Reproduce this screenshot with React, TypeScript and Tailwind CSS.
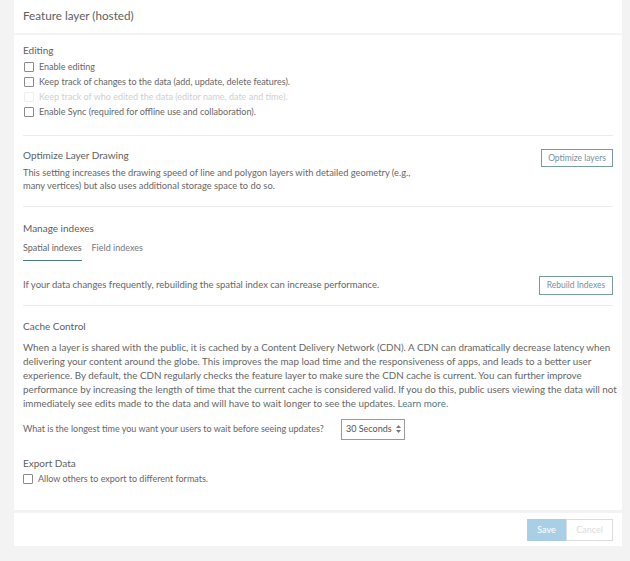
import React from "react";

const font = { fontFamily: "Lato, 'Open Sans', sans-serif" };

function Check({ label, disabled }: { label: string; disabled?: boolean }) {
  return (
    <div className="flex items-center h-[15px] text-[9px]">
      <span
        className={`w-[10px] h-[10px] border rounded-[1px] mr-[5px] ${
          disabled ? "border-[#eeeeee]" : "border-[#8a8a8a]"
        }`}
      />
      <span className={disabled ? "text-[#d0d0d0]" : "text-[#666666]"}>{label}</span>
    </div>
  );
}

function Divider() {
  return <div className="h-px bg-[#ececec]" />;
}

export default function App() {
  return (
    <div className="w-[630px] h-[561px] bg-[#f3f3f3] px-[14px] text-[9.5px] text-[#666666]" style={font}>
      <div className="w-[608px] bg-white">
        {/* header */}
        <div className="h-[33px] flex items-center px-[9px] pb-[2px] text-[11.7px] text-[#5e5e5e]">
          Feature layer (hosted)
        </div>
        <div className="h-[2px] bg-[#f3f3f3]" />

        <div className="px-[9px] h-[475px]">
          {/* Editing */}
          <div className="pt-[8px] pb-[16px]">
            <div className="text-[10px] text-[#5e5e5e] mb-px">Editing</div>
            <div className="pl-px">
              <Check label="Enable editing" />
              <Check label="Keep track of changes to the data (add, update, delete features)." />
              <Check label="Keep track of who edited the data (editor name, date and time)." disabled />
              <Check label="Enable Sync (required for offline use and collaboration)." />
            </div>
          </div>
          <Divider />

          {/* Optimize */}
          <div className="flex justify-between pt-[12px] pb-[14px]">
            <div className="w-[420px]">
              <div className="text-[10px] text-[#5e5e5e] mb-[3px]">Optimize Layer Drawing</div>
              <div className="leading-[13px] text-[9.3px]">
                This setting increases the drawing speed of line and polygon layers with detailed geometry (e.g.,
                <br />
                many vertices) but also uses additional storage space to do so.
              </div>
            </div>
            <button className="self-start mt-[1px] h-[18px] w-[72px] border border-[#7a9aa2] text-[#7890a0] text-[8.5px]">
              Optimize layers
            </button>
          </div>
          <Divider />

          {/* Manage indexes */}
          <div className="pt-[14px]">
            <div className="text-[10px] text-[#5e5e5e] mb-[5px]">Manage indexes</div>
            <div className="flex gap-[10px] text-[9px]">
              <div className="pb-[5px] border-b-[1.5px] border-[#4d7d8a] text-[#666666]">Spatial indexes</div>
              <div className="pb-[5px] text-[#777777]">Field indexes</div>
            </div>
            <div className="flex justify-between items-center pt-[15px] pb-[10px]">
              <div>If your data changes frequently, rebuilding the spatial index can increase performance.</div>
              <button className="h-[19px] w-[74px] border border-[#7a9aa2] text-[#7890a0] text-[8.5px]">
                Rebuild Indexes
              </button>
            </div>
          </div>
          <Divider />

          {/* Cache control */}
          <div className="pt-[13px]">
            <div className="text-[10px] text-[#5e5e5e] mb-[6px]">Cache Control</div>
            <div className="leading-[14px] text-[9.8px] whitespace-nowrap">
              When a layer is shared with the public, it is cached by a Content Delivery Network (CDN). A CDN can dramatically decrease latency when
              <br />
              delivering your content around the globe. This improves the map load time and the responsiveness of apps, and leads to a better user
              <br />
              experience. By default, the CDN regularly checks the feature layer to make sure the CDN cache is current. You can further improve
              <br />
              performance by increasing the length of time that the current cache is considered valid. If you do this, public users viewing the data will not
              <br />
              immediately see edits made to the data and will have to wait longer to see the updates.{" "}
              <span className="text-[#4d7d8a]">Learn more.</span>
            </div>
            <div className="flex items-center mt-[9px]">
              <span className="text-[9px] w-[318px]">What is the longest time you want your users to wait before seeing updates?</span>
              <div className="w-[64px] h-[21px] border border-[#9a9a9a] flex items-center justify-between pl-[4px] pr-[3px] text-[9px] text-[#555555]">
                <span>30 Seconds</span>
                <svg width="5" height="8" viewBox="0 0 5 8" className="fill-[#777777]">
                  <path d="M2.5 0 L5 3 L0 3 Z" />
                  <path d="M2.5 8 L5 5 L0 5 Z" />
                </svg>
              </div>
            </div>
          </div>

          {/* Export */}
          <div className="pt-[16px]">
            <div className="text-[10px] text-[#5e5e5e] mb-[1px]">Export Data</div>
            <Check label="Allow others to export to different formats." />
          </div>
        </div>

        <div className="h-[3px] bg-[#f3f3f3]" />
        {/* footer */}
        <div className="h-[33px] flex items-center justify-end px-[9px]">
          <button className="h-[22px] w-[39px] bg-[#a9cfe6] text-white text-[9px]">Save</button>
          <button className="h-[22px] w-[47px] border border-[#dcdcdc] text-[#dcdcdc] text-[9px]">Cancel</button>
        </div>
      </div>
    </div>
  );
}
